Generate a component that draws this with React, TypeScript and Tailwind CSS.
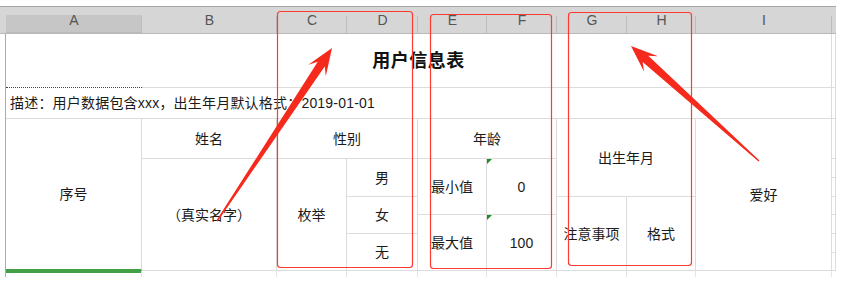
import React from "react";

type P = { className?: string; children?: React.ReactNode };

const font = "font-['Liberation_Sans','Noto_Sans_CJK_SC',sans-serif]";

// Body cell with the light spreadsheet gridlines on its right and bottom edge.
function Cell({ className = "", children }: P) {
  return (
    <div
      className={`flex items-center justify-center border-b border-r border-[#dcdcdc] text-[14px] leading-none text-[#1a1a1a] ${className}`}
    >
      {children}
    </div>
  );
}

// Column letter in the sheet header.
function Head({ className = "", children }: P) {
  return (
    <div
      className={`relative flex items-center justify-center border-t border-b border-t-[#a6a6a6] border-b-[#b9b9b9] bg-[#d6d6d6] text-[14px] leading-none text-[#555] after:absolute after:right-0 after:top-[9px] after:bottom-0 after:w-px after:bg-[#bdbdbd] ${className}`}
    >
      {children}
    </div>
  );
}

// Red annotation arrow: pointed tail, widening shaft, barbed head.
function Arrow({ tail, tip }: { tail: [number, number]; tip: [number, number] }) {
  const [tx, ty] = tail;
  const [px, py] = tip;
  const dx = px - tx;
  const dy = py - ty;
  const len = Math.hypot(dx, dy);
  const ux = dx / len;
  const uy = dy / len;
  const nx = -uy;
  const ny = ux;
  const headLen = 27;
  const headHalf = 10.5;
  const neckHalf = 4.2;
  const tailHalf = 0.7;
  const bx = px - ux * headLen;
  const by = py - uy * headLen;
  const kx = px - ux * headLen * 0.72;
  const ky = py - uy * headLen * 0.72;
  const pts: [number, number][] = [
    [tx + nx * tailHalf, ty + ny * tailHalf],
    [kx + nx * neckHalf, ky + ny * neckHalf],
    [bx + nx * headHalf, by + ny * headHalf],
    [px, py],
    [bx - nx * headHalf, by - ny * headHalf],
    [kx - nx * neckHalf, ky - ny * neckHalf],
    [tx - nx * tailHalf, ty - ny * tailHalf],
  ];
  return <polygon points={pts.map((p) => p.join(",")).join(" ")} fill="#f5291c" />;
}

function Flag() {
  return (
    <span className="absolute left-0 top-0 h-0 w-0 border-t-[5px] border-r-[5px] border-t-[#1e8c1e] border-r-transparent" />
  );
}

export default function App() {
  return (
    <div className={`relative h-[285px] w-[844px] overflow-hidden bg-white pt-[6px] ${font}`}>
      <div className="grid w-[836px] grid-cols-[6px_136px_135px_70px_71px_69px_70px_70px_69px_136px_4px] grid-rows-[28px_54px_31px_40px_19px_19px_18px_19px_19px_18px_6px]">
        {/* header */}
        <div className="col-start-1 row-start-1 border-t border-b border-t-[#a6a6a6] border-b-[#b9b9b9] bg-[#d6d6d6]" />
        <Head className="col-start-2 row-start-1 border-b-2 border-b-[#43a047] bg-[linear-gradient(#d6d6d6_0,#d6d6d6_8px,#c6c6c6_8px)] text-[#4f8a4f]">
          A
        </Head>
        <Head className="col-start-3 row-start-1">B</Head>
        <Head className="col-start-4 row-start-1">C</Head>
        <Head className="col-start-5 row-start-1">D</Head>
        <Head className="col-start-6 row-start-1">E</Head>
        <Head className="col-start-7 row-start-1">F</Head>
        <Head className="col-start-8 row-start-1">G</Head>
        <Head className="col-start-9 row-start-1">H</Head>
        <Head className="col-start-10 row-start-1">I</Head>
        <Head className="col-start-11 row-start-1 after:hidden" />

        {/* gutter left of column A */}
        <div className="col-start-1 row-start-2 row-span-10 border-r border-[#ababab]" />

        {/* row 1: title */}
        <div className="col-start-2 col-span-9 row-start-2 flex flex-col border-r border-[#dcdcdc]">
          <div className="flex flex-1 items-center justify-center pt-[1px] text-[18px] font-bold leading-none tracking-[0.5px] text-[#111]">
            用户信息表
          </div>
          <div className="flex">
            <div className="w-[136px] border-t border-dotted border-[#444]" />
            <div className="flex-1 border-t border-[#dcdcdc]" />
          </div>
        </div>
        <Cell className="col-start-11 row-start-2" />

        {/* row 2: description */}
        <Cell className="col-start-2 col-span-9 row-start-3 justify-start pl-[4px] tracking-[0.2px]">
          描述：用户数据包含xxx，出生年月默认格式：2019-01-01
        </Cell>
        <Cell className="col-start-11 row-start-3" />

        {/* rows 3-9 */}
        <Cell className="col-start-2 row-start-4 row-span-7 border-b-2 border-b-[#43a047] shadow-[0_2px_0_#43a047]">
          序号
        </Cell>
        <Cell className="col-start-3 row-start-4">姓名</Cell>
        <Cell className="col-start-4 col-span-2 row-start-4">性别</Cell>
        <Cell className="col-start-6 col-span-2 row-start-4">年龄</Cell>
        <Cell className="col-start-8 col-span-2 row-start-4 row-span-3">出生年月</Cell>
        <Cell className="col-start-10 row-start-4 row-span-7">爱好</Cell>

        <Cell className="col-start-3 row-start-5 row-span-6">（真实名字）</Cell>
        <Cell className="col-start-4 row-start-5 row-span-6">枚举</Cell>
        <Cell className="col-start-5 row-start-5 row-span-2">男</Cell>
        <Cell className="col-start-5 row-start-7 row-span-2">女</Cell>
        <Cell className="col-start-5 row-start-9 row-span-2">无</Cell>
        <Cell className="col-start-6 row-start-5 row-span-3">最小值</Cell>
        <Cell className="col-start-7 row-start-5 row-span-3 relative">
          <Flag />0
        </Cell>
        <Cell className="col-start-6 row-start-8 row-span-3">最大值</Cell>
        <Cell className="col-start-7 row-start-8 row-span-3 relative">
          <Flag />100
        </Cell>
        <Cell className="col-start-8 row-start-7 row-span-4">注意事项</Cell>
        <Cell className="col-start-9 row-start-7 row-span-4">格式</Cell>

        {/* narrow column J at the right edge */}
        <Cell className="col-start-11 row-start-4" />
        <Cell className="col-start-11 row-start-5" />
        <Cell className="col-start-11 row-start-6" />
        <Cell className="col-start-11 row-start-7" />
        <Cell className="col-start-11 row-start-8" />
        <Cell className="col-start-11 row-start-9" />
        <Cell className="col-start-11 row-start-10" />

        {/* next row, cut off */}
        <div className="col-start-2 row-start-11 border-r border-[#e4e4e4]" />
        <div className="col-start-3 row-start-11 border-r border-[#e4e4e4]" />
        <div className="col-start-4 row-start-11 border-r border-[#e4e4e4]" />
        <div className="col-start-5 row-start-11 border-r border-[#e4e4e4]" />
        <div className="col-start-6 row-start-11 border-r border-[#e4e4e4]" />
        <div className="col-start-7 row-start-11 border-r border-[#e4e4e4]" />
        <div className="col-start-8 row-start-11 border-r border-[#e4e4e4]" />
        <div className="col-start-9 row-start-11 border-r border-[#e4e4e4]" />
        <div className="col-start-10 row-start-11 border-r border-[#e4e4e4]" />
      </div>

      {/* red highlight boxes around column pairs, plus the pointer arrows */}
      <svg className="pointer-events-none absolute inset-0" width="844" height="285">
        <g fill="none" stroke="#ff3b30" strokeWidth="1.2">
          <rect x="277.5" y="11.5" width="135" height="256" rx="3" />
          <rect x="430.5" y="14.5" width="121" height="254" rx="3" />
          <rect x="568.5" y="12.5" width="123" height="253" rx="3" />
        </g>
        <Arrow tail={[217, 221]} tip={[332, 48]} />
        <Arrow tail={[759, 161]} tip={[631, 46]} />
      </svg>
    </div>
  );
}
